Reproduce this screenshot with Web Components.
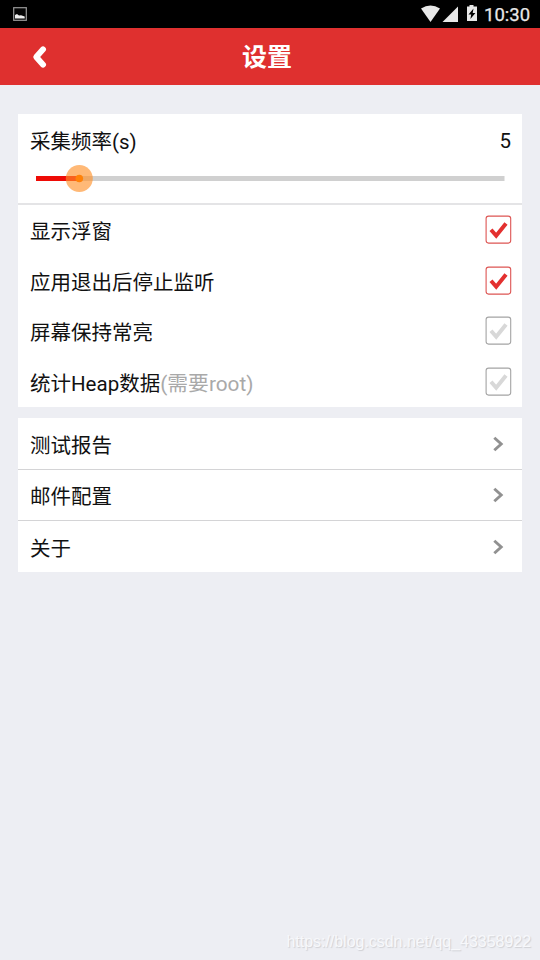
<!DOCTYPE html>
<html lang="zh-CN">
<head>
<meta charset="utf-8">
<title>设置</title>
<style>
html,body{margin:0;height:100%;background:#edeef3}
body{font-family:Roboto,"Noto Sans CJK SC",sans-serif;overflow:hidden}
</style>
</head>
<body>
<settings-page></settings-page>
<script>
const define = (name, html, setup) => {
  const template = document.createElement('template');
  template.innerHTML = html;
  customElements.define(name, class extends HTMLElement {
    constructor() {
      super();
      this.attachShadow({ mode: 'open' }).append(template.content.cloneNode(true));
    }
    connectedCallback() { if (setup) setup(this, this.shadowRoot); }
  });
};

define('status-bar', `
<style>
:host{display:flex;align-items:center;height:28px;background:#000;color:#e8e8e8;padding:0 10px 0 13px;box-sizing:border-box}
svg{display:block;flex:none}
.gap{flex:1}
.time{font-size:18.5px;line-height:26px;padding-top:2px;width:46px;white-space:nowrap;margin-left:6px;-webkit-text-stroke:.25px #e8e8e8}
</style>
<svg width="14" height="14" viewBox="0 0 14 14"><rect x=".7" y=".7" width="12.6" height="12.6" fill="#050505" stroke="#999" stroke-width="1.2"/><path d="M2 11.5V8l2-1 2 1.6 2-.4 3.7 1.2v2.1z" fill="#eee"/></svg>
<span class="gap"></span>
<svg width="57" height="28" viewBox="0 0 57 28" fill="#e8e8e8"><path d="M0 8.6Q9.5 2.3 19 8.6L9.5 22z"/><path d="M37 6.5V22H21.5z"/><path d="M46 6.5h2.5V5h4v1.5H56V21H46z"/><path d="M52.5 8.5l-5 6h2.7l-.8 4.5 5-6h-2.7z" fill="#000"/></svg>
<span class="time">10:30</span>
`);

define('title-bar', `
<style>
:host{display:grid;grid-template-columns:80px 1fr 86px;align-items:center;height:57px;background:#df302f;color:#fff;box-sizing:border-box}
svg{display:block;margin-left:30px}
h1{margin:0;text-align:center;font-size:25px;line-height:55px;padding-top:2px;font-weight:700}
</style>
<svg width="20" height="24" viewBox="0 0 20 24"><path d="M13.1 4.3L6.2 12l6.9 7.7" fill="none" stroke="#fff" stroke-width="5.8" stroke-linecap="round" stroke-linejoin="round"/></svg>
<h1><slot></slot></h1>
`);

define('settings-card', `
<style>:host{display:block;width:504px;background:#fff}</style><slot></slot>
`);

define('rate-slider', `
<style>
:host{display:block;height:91px;box-sizing:border-box;border-bottom:2px solid #e4e4e6;padding:12px 11px 0 12px}
.label{display:flex;justify-content:space-between;font-size:20.5px;line-height:30px;height:30px;color:#111}
.name{padding-top:1px}
svg{display:block;margin:8px 0 0 6px}
</style>
<div class="label"><span class="name"><slot></slot></span><span class="value"></span></div>
<svg width="469" height="28" viewBox="0 0 469 28"><path d="M0 14.5h468.5" stroke="#d0d0d0" stroke-width="5"/><path d="M0 14.5h43" stroke="#ee0b06" stroke-width="5"/><circle cx="43.3" cy="14.5" r="13.5" fill="#ff922b" fill-opacity=".64"/><circle cx="43.3" cy="14.5" r="3.8" fill="#ff8209"/></svg>
`, (host, root) => { root.querySelector('.value').textContent = host.getAttribute('value'); });

define('check-row', `
<style>
:host{--frame:#a4a4a4;--mark:#d8d8d8;display:flex;align-items:center;justify-content:space-between;height:50.5px;padding:0 10px 0 12px;box-sizing:border-box;font-size:20.5px;line-height:30px;color:#111}
:host([checked]){--frame:#dd5553;--mark:#e3302f}
span{padding-top:4px}
svg{display:block}
::slotted(small){font-size:20.8px;color:#a9a9a9}
</style>
<span><slot></slot></span>
<svg width="27" height="30" viewBox="0 0 27 30"><rect x="1.1" y="1.1" width="24.6" height="27" rx="2.5" fill="#fff" stroke="var(--frame)" stroke-width="1.1"/><path d="M6 14.7l5.2 6L21 8.5" fill="none" stroke="var(--mark)" stroke-width="4"/></svg>
`);

define('link-row', `
<style>
:host{display:flex;align-items:center;justify-content:space-between;height:51px;padding:0 18px 0 12px;box-sizing:border-box;font-size:20.5px;line-height:30px;color:#111;border-bottom:1px solid #d4d4d6}
:host(:first-child){height:52px}
:host(:last-child){border-bottom:0}
span{padding-top:4px}
svg{display:block}
</style>
<span><slot></slot></span>
<svg width="12" height="16" viewBox="0 0 12 16"><path d="M2.3 1.7L9.2 8l-6.9 6.3" fill="none" stroke="#919191" stroke-width="2.9"/></svg>
`);

define('page-watermark', `
<style>:host{display:block;font:15.95px/20px "Liberation Sans",sans-serif;color:#f7f8fb;text-shadow:1px 1px 1px #cfd0d4;white-space:nowrap}</style><slot></slot>
`);

define('settings-page', `
<style>
:host{display:flex;flex-direction:column;width:540px;height:960px;background:#edeef3}
main{flex:1;display:flex;flex-direction:column;gap:11px;padding:29px 18px 0}
footer{display:flex;justify-content:flex-end;padding:0 9px 8px 0}
</style>
<status-bar></status-bar>
<title-bar>设置</title-bar>
<main>
<settings-card>
<rate-slider value="5">采集频率(s)</rate-slider>
<check-row checked>显示浮窗</check-row>
<check-row checked>应用退出后停止监听</check-row>
<check-row>屏幕保持常亮</check-row>
<check-row>统计Heap数据<small>(需要root)</small></check-row>
</settings-card>
<settings-card>
<link-row>测试报告</link-row>
<link-row>邮件配置</link-row>
<link-row>关于</link-row>
</settings-card>
</main>
<footer><page-watermark>https://blog.csdn.net/qq_43358922</page-watermark></footer>
`);
</script>
</body>
</html>
